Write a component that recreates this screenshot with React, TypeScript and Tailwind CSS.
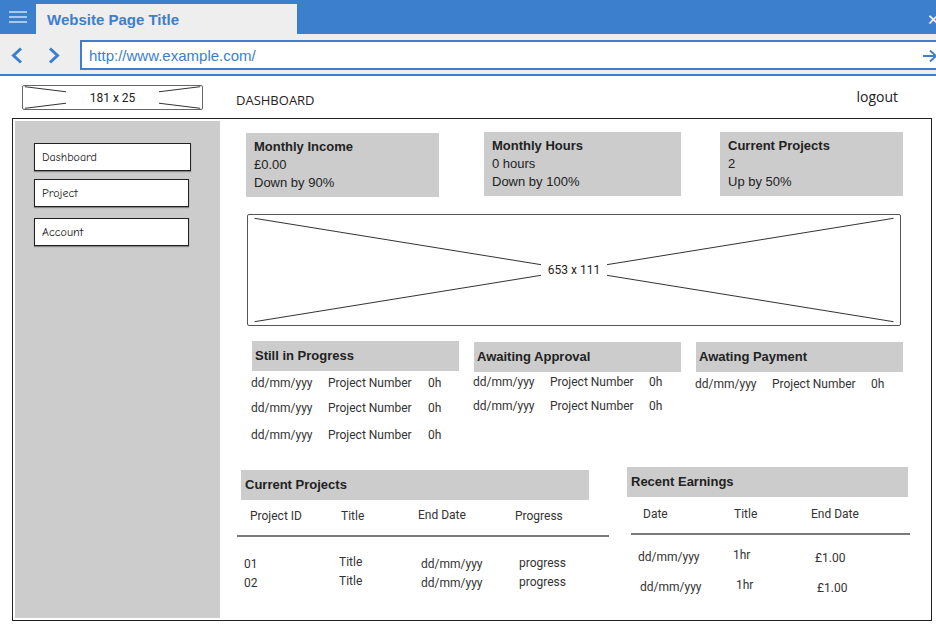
import type { ReactNode } from 'react';

const arial = "font-['Liberation_Sans',Arial,sans-serif]";
const roboto = 'font-[Roboto,sans-serif]';

const XBox = ({ label, className, labelClass }: { label: string; className: string; labelClass: string }) => (
	<div className={`relative bg-white ${className}`}>
		<svg className="absolute inset-0 w-full h-full" viewBox="0 0 100 100" preserveAspectRatio="none">
			<line x1="1" y1="3" x2="99" y2="97" stroke="#333" strokeWidth="1" vectorEffect="non-scaling-stroke" />
			<line x1="99" y1="3" x2="1" y2="97" stroke="#333" strokeWidth="1" vectorEffect="non-scaling-stroke" />
		</svg>
		<div className="absolute inset-0 flex items-center justify-center">
			<span className={`bg-white text-[#222] ${roboto} ${labelClass}`}>{label}</span>
		</div>
	</div>
);

const Stat = ({ title, value, change, className }: { title: string; value: string; change: string; className: string }) => (
	<div className={`bg-[#cccccc] h-[64px] pl-[8px] pt-[5px] leading-[18px] text-[13px] text-[#222] ${arial} ${className}`}>
		<div className="font-bold">{title}</div>
		<div>{value}</div>
		<div>{change}</div>
	</div>
);

const Header = ({ children, className }: { children: ReactNode; className: string }) => (
	<div className={`h-[30px] bg-[#cccccc] flex items-center font-bold text-[13px] text-[#222] ${arial} ${className}`}>
		{children}
	</div>
);

const ListRow = ({ className, mid }: { className: string; mid: string }) => (
	<div className={`flex -ml-px h-4 leading-4 text-[12px] text-[#333] ${roboto} ${className}`}>
		<span className="w-[77px]">dd/mm/yyy</span>
		<span className={mid}>Project Number</span>
		<span>0h</span>
	</div>
);

const NavButton = ({ label, className }: { label: string; className: string }) => (
	<div
		className={`ml-[19px] h-[28px] bg-white border border-[#222] shadow-[0_1px_1px_rgba(0,0,0,0.35)] flex items-center pl-[7px] text-[12px] text-[#222] font-['Comic_Sans_MS','Comic_Neue',cursive] ${className}`}
	>
		{label}
	</div>
);

export default function App() {
	return (
		<div className="w-[936px] h-[624px] bg-white overflow-hidden flex flex-col">
			{/* browser title bar */}
			<div className="h-[34px] shrink-0 bg-[#3c7fcd] flex items-end">
				<div className="w-[36px] h-[34px] flex flex-col justify-center items-center gap-[3px]">
					<div className="w-[18px] h-[2px] bg-[#a9c8ee]" />
					<div className="w-[18px] h-[2px] bg-[#a9c8ee]" />
					<div className="w-[18px] h-[2px] bg-[#a9c8ee]" />
				</div>
				<div className={`w-[261px] h-[30px] bg-[#eeeeee] flex items-center pt-[3px] pl-[11px] font-bold text-[15px] text-[#3c7fcd] ${arial}`}>
					Website Page Title
				</div>
				<span className={`ml-auto self-start mt-[9px] -mr-[4px] text-white text-[15px] ${arial}`}>✕</span>
			</div>

			{/* address bar */}
			<div className="h-[40px] shrink-0 bg-[#eeeeee] flex items-start">
				<svg className="ml-[11px] mt-[13px]" width="12" height="17" viewBox="0 0 12 17">
					<polyline points="10,1.5 2.5,8.5 10,15.5" fill="none" stroke="#3c7fcd" strokeWidth="3" />
				</svg>
				<svg className="ml-[25px] mt-[13px]" width="12" height="17" viewBox="0 0 12 17">
					<polyline points="2,1.5 9.5,8.5 2,15.5" fill="none" stroke="#3c7fcd" strokeWidth="3" />
				</svg>
				<div className={`ml-[20px] mt-[6px] -mr-[6px] flex-1 h-[30px] bg-white border-2 border-r-0 border-[#3c7fcd] flex items-center pt-[2px] pl-[7px] text-[15px] text-[#3c7fcd] ${arial}`}>
					http://www.example.com/
					<svg className="ml-auto mr-[5px]" width="15" height="14" viewBox="0 0 15 14">
						<path d="M1 7H14M8 1.5L14 7L8 12.5" fill="none" stroke="#3c7fcd" strokeWidth="1.8" />
					</svg>
				</div>
			</div>
			<div className="h-[2px] shrink-0 bg-[#3c7fcd]" />

			{/* page header */}
			<div className="h-[42px] shrink-0 flex items-start">
				<XBox
					label="181 x 25"
					className="ml-[22px] mt-[9px] w-[181px] h-[25px] rounded-[2px] border-[1.5px] border-[#666]"
					labelClass="text-[12px] px-[24px] leading-[14px]"
				/>
				<div className="ml-[33px] mt-[16px] leading-4 text-[13px] text-[#222] font-['Open_Sans',sans-serif]">DASHBOARD</div>
				<div className="ml-auto mr-[38px] mt-[11px] leading-5 text-[14px] text-[#222] font-['Open_Sans',sans-serif]">logout</div>
			</div>

			{/* main frame */}
			<div className="ml-[12px] w-[920px] h-[503px] shrink-0 border border-[#222] p-[2px] flex">
				<aside className="w-[205px] bg-[#cccccc] flex flex-col items-start">
					<NavButton label="Dashboard" className="mt-[22px] w-[157px]" />
					<NavButton label="Project" className="mt-[8px] w-[155px]" />
					<NavButton label="Account" className="mt-[11px] w-[155px]" />
				</aside>

				<main className="flex-1 flex flex-col">
					{/* stats */}
					<div className="mt-[11px] flex items-start">
						<Stat title="Monthly Income" value="£0.00" change="Down by 90%" className="ml-[26px] mt-px w-[193px]" />
						<Stat title="Monthly Hours" value="0 hours" change="Down by 100%" className="ml-[45px] w-[197px]" />
						<Stat title="Current Projects" value="2" change="Up by 50%" className="ml-[39px] w-[183px]" />
					</div>

					{/* chart placeholder */}
					<XBox
						label="653 x 111"
						className="ml-[27px] mt-[17px] w-[654px] h-[112px] rounded-[2px] border-[1.5px] border-[#555]"
						labelClass="text-[12px] px-[7px] leading-[14px]"
					/>

					{/* status lists */}
					<div className="mt-[15px] flex items-start">
						<div className="ml-[32px] w-[207px] flex flex-col">
							<Header className="pl-[3px]">Still in Progress</Header>
							<ListRow className="mt-[4px]" mid="w-[100px]" />
							<ListRow className="mt-[9px]" mid="w-[100px]" />
							<ListRow className="mt-[11px]" mid="w-[100px]" />
						</div>
						<div className="ml-[15px] mt-px w-[207px] flex flex-col">
							<Header className="pl-[3px]">Awaiting Approval</Header>
							<ListRow className="mt-[2px]" mid="w-[99px]" />
							<ListRow className="mt-[8px]" mid="w-[99px]" />
						</div>
						<div className="ml-[15px] mt-px w-[207px] flex flex-col">
							<Header className="pl-[3px]">Awating Payment</Header>
							<ListRow className="mt-[4px]" mid="w-[99px]" />
						</div>
					</div>

					{/* tables */}
					<div className={`mt-[24px] flex items-start text-[12px] text-[#333] ${roboto}`}>
						<div className="ml-[17px] mt-[3px] w-[372px] flex flex-col">
							<Header className="ml-[4px] w-[348px] pl-[4px]">Current Projects</Header>
							<div className="mt-[8px] pl-[13px] flex items-start h-4 leading-4">
								<span className="w-[91px]">Project ID</span>
								<span className="w-[77px]">Title</span>
								<span className="w-[97px] -mt-px">End Date</span>
								<span>Progress</span>
							</div>
							<div className="mt-[11px] h-[2px] bg-[#7a7a7a]" />
							<div className="mt-[19px] pl-[7px] flex items-start h-4 leading-4">
								<span className="w-[95px]">01</span>
								<span className="w-[82px] -mt-[2px]">Title</span>
								<span className="w-[98px]">dd/mm/yyy</span>
								<span className="-mt-px">progress</span>
							</div>
							<div className="mt-[3px] pl-[7px] flex items-start h-4 leading-4">
								<span className="w-[95px]">02</span>
								<span className="w-[82px] -mt-[2px]">Title</span>
								<span className="w-[98px]">dd/mm/yyy</span>
								<span className="-mt-px">progress</span>
							</div>
						</div>

						<div className="ml-[18px] w-[283px] flex flex-col">
							<Header className="w-[281px] pl-[4px]">Recent Earnings</Header>
							<div className="mt-[9px] pl-[16px] flex items-start h-4 leading-4">
								<span className="w-[91px]">Date</span>
								<span className="w-[77px]">Title</span>
								<span>End Date</span>
							</div>
							<div className="mt-[11px] ml-[4px] w-[279px] h-[2px] bg-[#7a7a7a]" />
							<div className="mt-[14px] pl-[11px] flex items-start h-4 leading-4">
								<span className="w-[95px]">dd/mm/yyy</span>
								<span className="w-[82px] -mt-[2px]">1hr</span>
								<span className="mt-px">£1.00</span>
							</div>
							<div className="mt-[14px] pl-[13px] flex items-start h-4 leading-4">
								<span className="w-[96px]">dd/mm/yyy</span>
								<span className="w-[81px] -mt-[2px]">1hr</span>
								<span className="mt-px">£1.00</span>
							</div>
						</div>
					</div>
				</main>
			</div>
		</div>
	);
}
